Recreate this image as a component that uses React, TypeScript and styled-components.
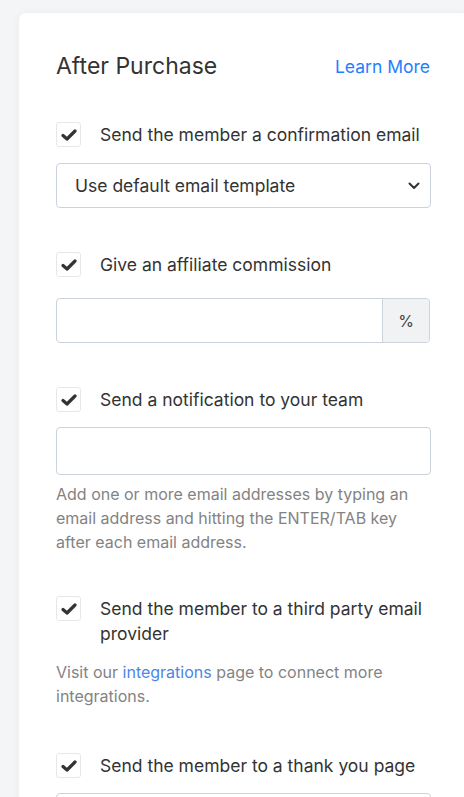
import React from 'react'
import styled, { createGlobalStyle } from 'styled-components'

const GlobalStyle = createGlobalStyle`
  html, body {
    margin: 0;
    padding: 0;
    background: #f4f5f7;
    overflow: hidden;
  }
  body {
    font-family: Inter, "Noto Sans", sans-serif;
    color: #333;
  }
`

const Page = styled.div`
  padding: 13px 0 0 19px;
  height: 797px;
  box-sizing: border-box;
`

const Card = styled.div`
  width: 449px;
  min-height: 800px;
  box-sizing: border-box;
  background: #fff;
  border-radius: 7px;
  padding: 38px 37px 0 37px;
  box-shadow: 0 0 10px rgba(0, 0, 0, 0.04);
`

const Header = styled.div`
  display: flex;
  align-items: center;
  justify-content: space-between;
  height: 30px;
`

const Title = styled.h2`
  margin: 0;
  font-size: 23px;
  font-weight: 400;
  color: #333;
`

const LearnMore = styled.a`
  font-size: 17.5px;
  color: #1e80ff;
  text-decoration: none;
  margin-right: 1px;
`

const Section = styled.div<{ $top: number }>`
  margin-top: ${({ $top }) => $top}px;
`

const CheckRow = styled.label`
  display: flex;
  align-items: flex-start;
  gap: 19px;
`

const CheckBox = styled.span`
  flex: 0 0 auto;
  width: 23px;
  height: 23px;
  border: 1px solid #e6e7ea;
  border-radius: 3px;
  display: flex;
  align-items: center;
  justify-content: center;
  background: #fff;
`

const CheckLabel = styled.span`
  font-size: 17.5px;
  line-height: 25px;
  color: #333;
`

const Select = styled.div<{ $top: number }>`
  margin-top: ${({ $top }) => $top}px;
  height: 45px;
  box-sizing: border-box;
  border: 1px solid #ccd3de;
  border-radius: 4px;
  display: flex;
  align-items: center;
  justify-content: space-between;
  padding: 0 10px 0 18px;
  font-size: 17.5px;
  color: #333;
`

const InputGroup = styled.div<{ $top: number }>`
  margin-top: ${({ $top }) => $top}px;
  height: 45px;
  box-sizing: border-box;
  border: 1px solid #ccd3de;
  border-radius: 4px;
  display: flex;
  overflow: hidden;
  margin-right: 1px;
`

const GroupField = styled.div`
  flex: 1;
`

const Addon = styled.div`
  width: 46px;
  border-left: 1px solid #ccd3de;
  background: #f1f2f4;
  display: flex;
  align-items: center;
  justify-content: center;
  font-size: 16px;
  color: #444;
`

const TextField = styled.div<{ $top: number }>`
  margin-top: ${({ $top }) => $top}px;
  height: 48px;
  box-sizing: border-box;
  border: 1px solid #ccd3de;
  border-radius: 4px;
`

const Help = styled.p<{ $top: number }>`
  margin: ${({ $top }) => $top}px 0 0;
  font-size: 16px;
  line-height: 24px;
  color: #838383;
`

const HelpLink = styled.a`
  color: #4a86e8;
  text-decoration: none;
`

const Check = () => (
  <CheckBox>
    <svg width="16" height="14" viewBox="0 0 16 14">
      <path
        d="M2 7.5 L6 11 L14 3"
        fill="none"
        stroke="#333"
        strokeWidth="3.2"
        strokeLinecap="round"
        strokeLinejoin="round"
      />
    </svg>
  </CheckBox>
)

const Chevron = () => (
  <svg width="12" height="8" viewBox="0 0 12 8">
    <path
      d="M1.5 1.5 L6 6 L10.5 1.5"
      fill="none"
      stroke="#333"
      strokeWidth="2"
      strokeLinecap="round"
      strokeLinejoin="round"
    />
  </svg>
)

const CheckOption = ({ children }: { children: React.ReactNode }) => (
  <CheckRow>
    <Check />
    <CheckLabel>{children}</CheckLabel>
  </CheckRow>
)

export default function App() {
  return (
    <>
      <GlobalStyle />
      <Page>
        <Card>
          <Header>
            <Title>After Purchase</Title>
            <LearnMore href="#">Learn More</LearnMore>
          </Header>

          <Section $top={41}>
            <CheckOption>Send the member a confirmation email</CheckOption>
            <Select $top={16}>
              <span>Use default email template</span>
              <Chevron />
            </Select>
          </Section>

          <Section $top={44}>
            <CheckOption>Give an affiliate commission</CheckOption>
            <InputGroup $top={21}>
              <GroupField />
              <Addon>%</Addon>
            </InputGroup>
          </Section>

          <Section $top={44}>
            <CheckOption>Send a notification to your team</CheckOption>
            <TextField $top={15} />
            <Help $top={7}>
              Add one or more email addresses by typing an email address and
              hitting the ENTER/TAB key after each email address.
            </Help>
          </Section>

          <Section $top={42}>
            <CheckOption>Send the member to a third party email provider</CheckOption>
            <Help $top={14}>
              Visit our <HelpLink href="#">integrations</HelpLink> page to
              connect more integrations.
            </Help>
          </Section>

          <Section $top={45}>
            <CheckOption>Send the member to a thank you page</CheckOption>
            <TextField $top={15} />
          </Section>
        </Card>
      </Page>
    </>
  )
}
